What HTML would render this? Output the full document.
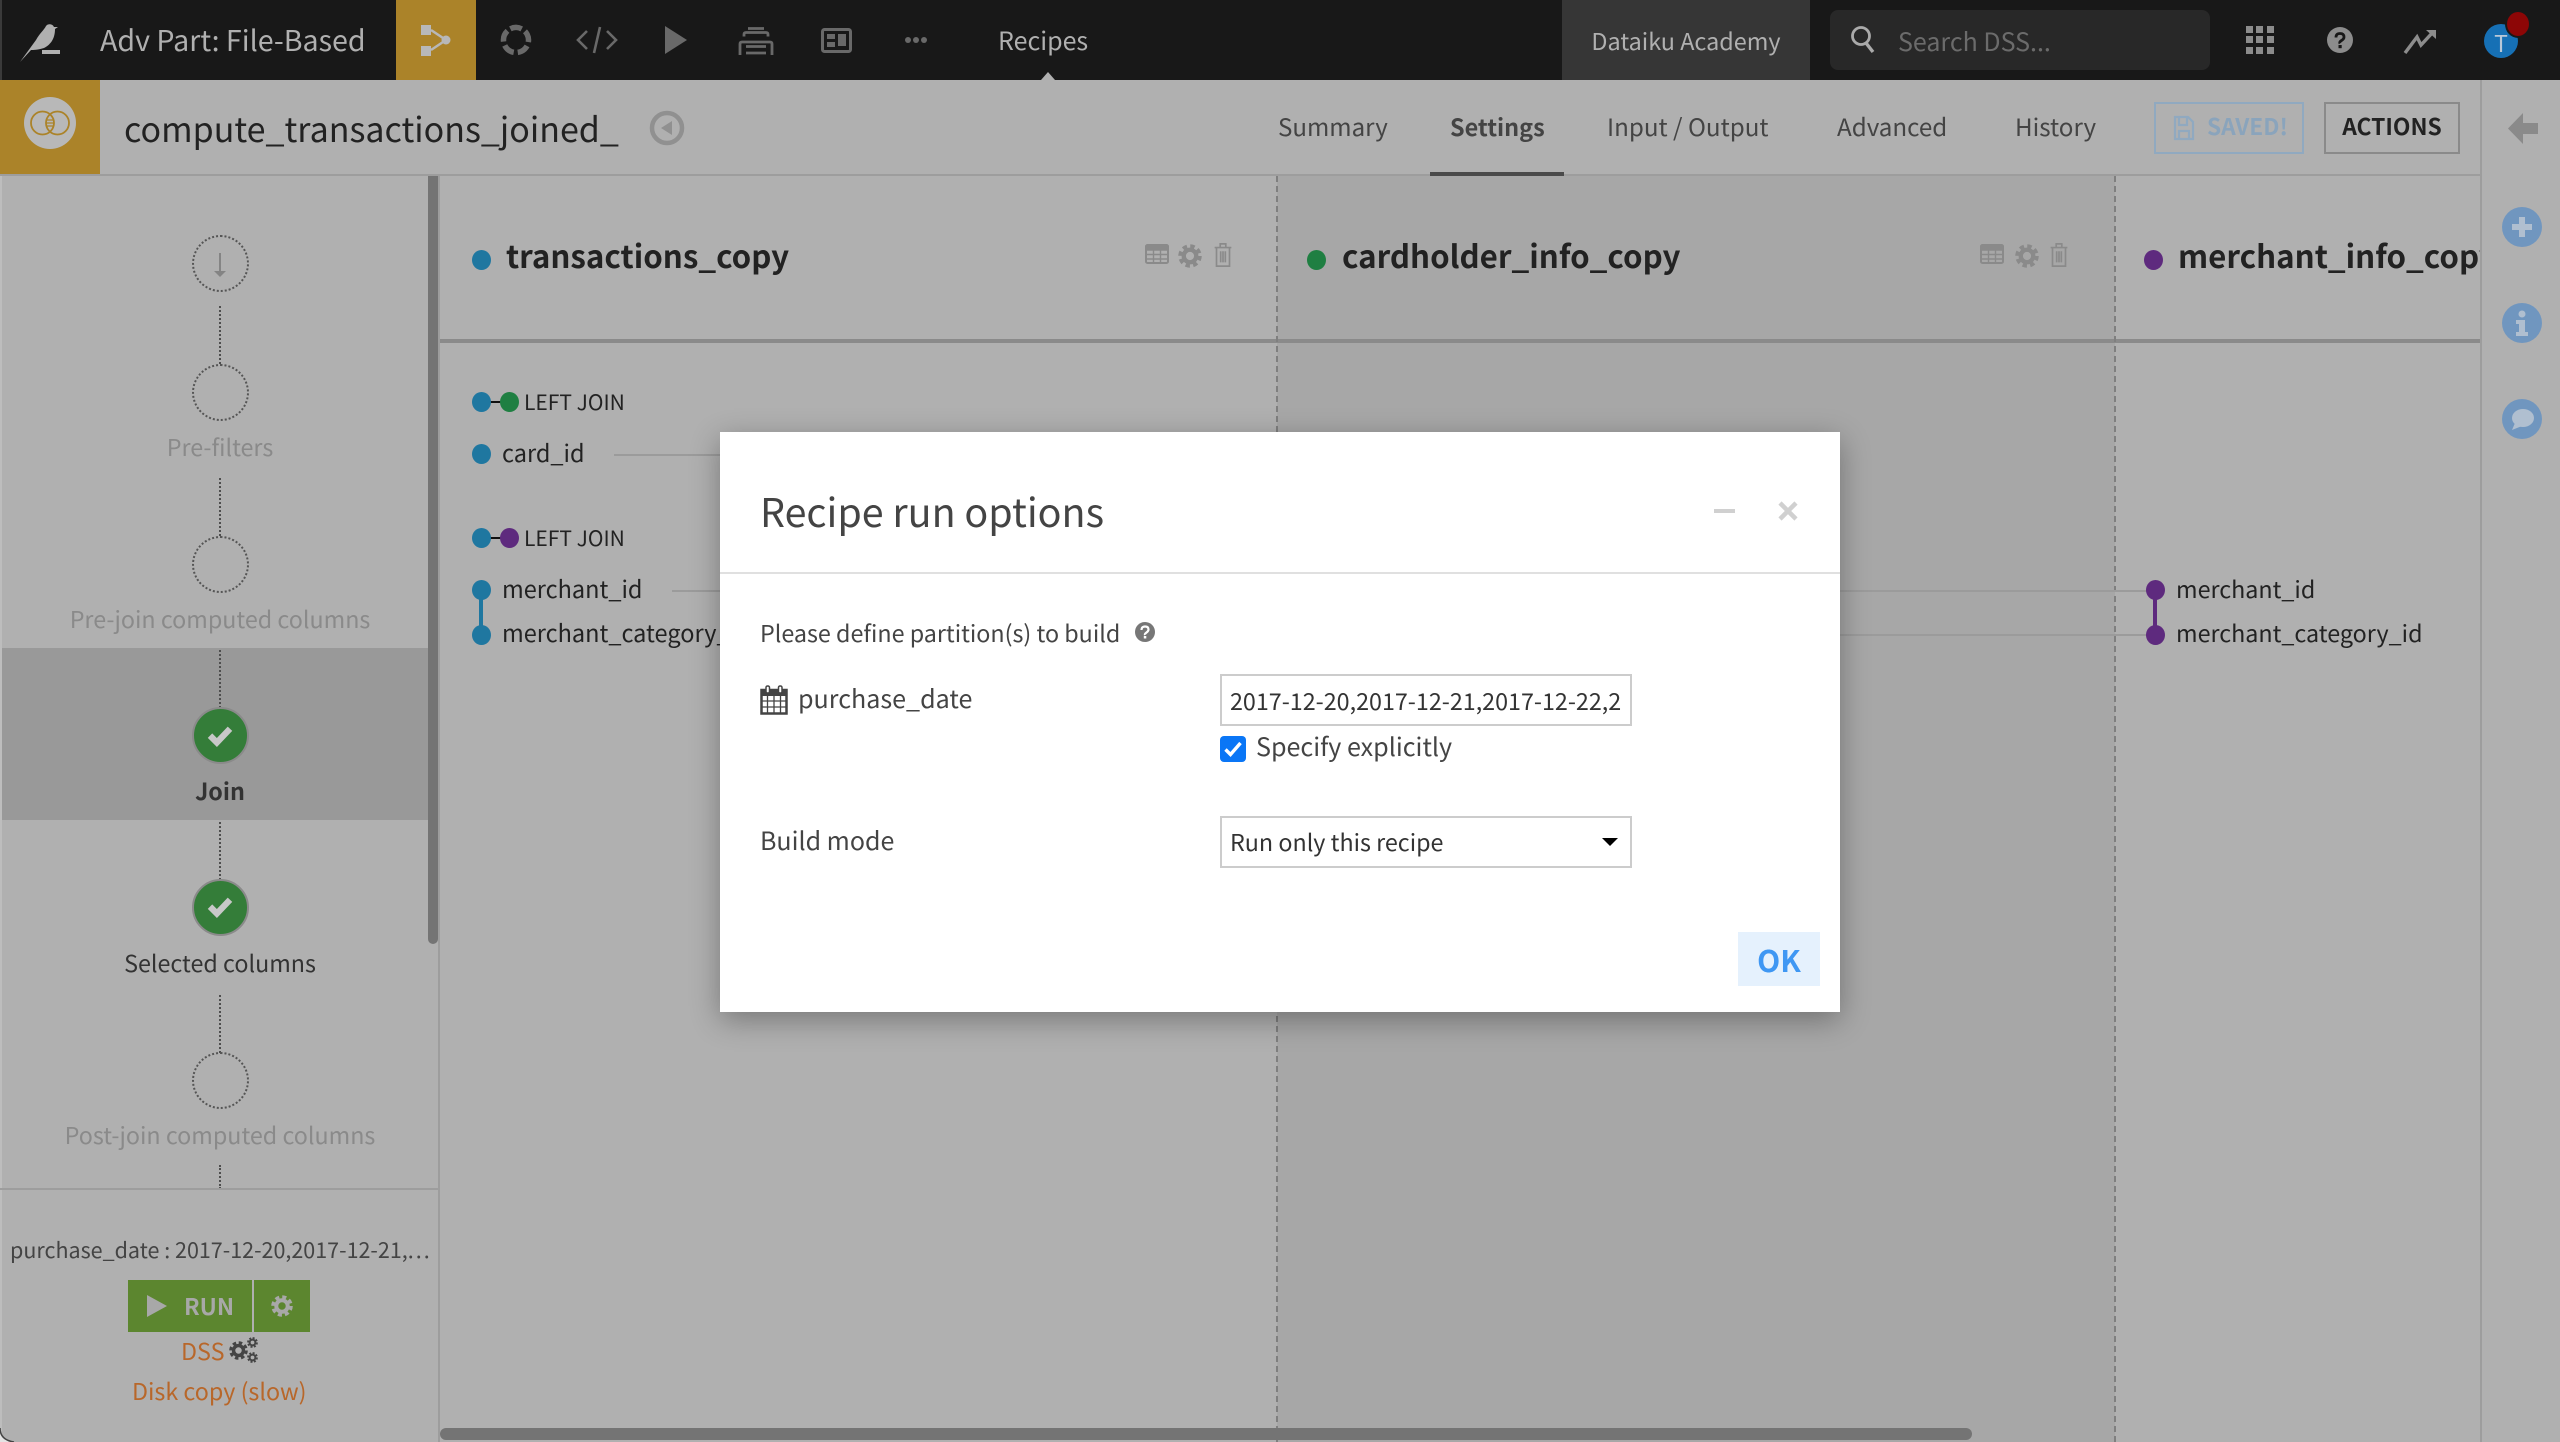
<!DOCTYPE html>
<html lang="en"><head><meta charset="utf-8"><title>Recipe run options</title>
<style>
html,body{margin:0;padding:0;width:2560px;height:1442px;overflow:hidden;background:#b0b0b0}
#p{position:relative;width:2560px;height:1442px;overflow:hidden;background:#b0b0b0;font-family:"Noto Sans CJK JP","Liberation Sans",sans-serif;color:#222}
.a{position:absolute}
.t{position:absolute;white-space:nowrap;line-height:40px;height:40px;font-size:23.3px}
.c{transform:translateX(-50%)}
.b{font-weight:700}
svg{position:absolute;overflow:visible}
.dot{position:absolute;width:19px;height:20px;border-radius:50%}
.bl{background:#1f77a0}.gr{background:#1f7f42}.pu{background:#5e2a7e}
.v{position:absolute;left:219px;width:0;border-left:2px dotted #4e4e4e}
.ring{position:absolute;left:192px;width:53px;height:53px;border:2px dotted #555;border-radius:50%}
.ok{position:absolute;left:192px;width:53px;height:53px;border:2px solid #8a8a8a;border-radius:50%;background:#347d39}
.dash{position:absolute;top:176px;height:1266px;width:0;border-left:2px dashed #7f7f7f}
.ln{position:absolute;height:2px;background:#9b9b9b}
</style></head><body><div id="p">
<svg width="0" height="0" style="position:absolute"><defs>
<symbol id="gear" viewBox="-10 -10 20 20"><circle r="5.2" fill="none" stroke="currentColor" stroke-width="3.6"/><circle r="8" fill="none" stroke="currentColor" stroke-width="3.6" stroke-dasharray="3.6 2.68"/></symbol>
<symbol id="tbl" viewBox="0 0 24 20"><rect x="1" y="1" width="22" height="18" rx="1.5" fill="none" stroke="currentColor" stroke-width="2"/><path d="M1 2h22v4H1zM8.5 6v13M15.5 6v13M1 10.500h22M1 15h22" fill="currentColor" stroke="currentColor" stroke-width="1.400"/></symbol>
<symbol id="trash" viewBox="0 0 20 28"><path d="M1 6h18M7 6V2h6v4M3 6v20h14V6M7.500 10v12M10 10v12M12.500 10v12" fill="none" stroke="currentColor" stroke-width="1.800"/></symbol>
<symbol id="check" viewBox="0 0 24 24"><path d="M4 12.500l5.500 5.500L20 7" fill="none" stroke="currentColor" stroke-width="5"/></symbol>
</defs></svg>

<!-- top bar -->
<div class="a" style="left:0;top:0;width:2560px;height:80px;background:#181818"></div>
<div class="a" style="left:0;top:0;width:2px;height:80px;background:#3a3a3a"></div>
<svg style="left:0;top:0" width="80" height="80"><path d="M20 62L36 40C40 33 44 30 46 26C48 23 53 24 54 27L58 27L55 29C55 37 52 44 44 48C38 50 33 50 31 50Z" fill="#b0b0b0"/><rect x="42" y="50" width="18" height="4" fill="#b0b0b0"/></svg>
<div class="t" style="left:100px;top:20px;font-size:28.6px;color:#b0b0b0">Adv Part: File-Based</div>
<div class="a" style="left:396px;top:0;width:80px;height:80px;background:#ab8329"></div>
<svg style="left:396px;top:0" width="80" height="80"><path d="M35 30L50 40L35 50" fill="none" stroke="#b8b8b8" stroke-width="2.500"/><rect x="25" y="25" width="10" height="10" fill="#b8b8b8"/><rect x="25" y="46" width="10" height="10" fill="#b8b8b8"/><circle cx="50" cy="40" r="4.500" fill="#b8b8b8"/></svg>
<svg style="left:476px;top:0" width="480" height="80" fill="#696969">
<circle cx="40" cy="40" r="12.500" fill="none" stroke="#696969" stroke-width="5.500" stroke-dasharray="11.700 4" transform="rotate(-116.800 40 40)"/>
<path d="M111 31l-9 9 9 9M131 31l9 9-9 9M124 27l-6 26" fill="none" stroke="#696969" stroke-width="2.600"/>
<path d="M189 26L211 40L189 54Z"/>
<path d="M272 28.500h16M268 36.500v-2q0-2 2-2h20q2 0 2 2v2M264 55V44q0-2 2-2h28q2 0 2 2v11M270 46.500h20M270 53h20" fill="none" stroke="#696969" stroke-width="2.800"/>
<rect x="346.500" y="29.500" width="28" height="22" rx="2" fill="none" stroke="#696969" stroke-width="3"/><rect x="351" y="34" width="8" height="5"/><rect x="351" y="42" width="8" height="5"/><rect x="362" y="34" width="8" height="12"/>
<circle cx="432" cy="40" r="3"/><circle cx="440" cy="40" r="3"/><circle cx="448" cy="40" r="3"/>
</svg>
<div class="t" style="left:998px;top:20px;font-size:25px;color:#b0b0b0">Recipes</div>
<svg style="left:1040px;top:70px" width="16" height="10"><path d="M8 2L15 10H1Z" fill="#b0b0b0"/></svg>
<div class="a" style="left:1562px;top:0;width:248px;height:80px;background:#363636"></div>
<div class="t c" style="left:1686px;top:20px;font-size:23.4px;color:#b0b0b0">Dataiku Academy</div>
<div class="a" style="left:1830px;top:10px;width:380px;height:60px;border-radius:8px;background:#282828"></div>
<svg style="left:1848px;top:24px" width="30" height="32"><circle cx="13" cy="12" r="8.500" fill="none" stroke="#aaa" stroke-width="2.800"/><path d="M18 19l7 9" stroke="#aaa" stroke-width="3.400"/></svg>
<div class="t" style="left:1898px;top:21px;font-size:25px;color:#6b6b6b">Search DSS...</div>
<svg style="left:2246px;top:26px" width="28" height="28" fill="#8c8c8c"><rect x="0" y="0" width="7" height="7"/><rect x="10" y="0" width="7" height="7"/><rect x="21" y="0" width="7" height="7"/><rect x="0" y="10" width="7" height="7"/><rect x="10" y="10" width="7" height="7"/><rect x="21" y="10" width="7" height="7"/><rect x="0" y="21" width="7" height="7"/><rect x="10" y="21" width="7" height="7"/><rect x="21" y="21" width="7" height="7"/></svg>
<svg style="left:2327px;top:27px" width="26" height="26"><circle cx="13" cy="13" r="13" fill="#8c8c8c"/><path d="M9 10.500Q9 6.500 13 6.500T17 10Q17 12 14.500 13.500T13 16.500" fill="none" stroke="#181818" stroke-width="2.800"/><rect x="11.500" y="18" width="3.200" height="3.200" fill="#181818"/></svg>
<svg style="left:2403px;top:28px" width="34" height="26"><path d="M2 25L14 9L18 17L31 3" fill="none" stroke="#8c8c8c" stroke-width="3.400"/><path d="M23 2h10v9z" fill="#8c8c8c"/></svg>
<div class="a" style="left:2484px;top:24px;width:34px;height:34px;border-radius:50%;background:#1670b5"></div>
<div class="t c" style="left:2501px;top:22px;font-size:23px;color:#b8c8d8">T</div>
<div class="a" style="left:2507px;top:12px;width:22px;height:24px;border-radius:50%;background:#8d0606;box-shadow:0 0 0 2px #181818"></div>

<!-- sub header -->
<div class="a" style="left:0;top:80px;width:100px;height:94px;background:#ab8329"></div>
<div class="a" style="left:24px;top:97px;width:52px;height:52px;border-radius:50%;background:#b8b8b8"></div>
<svg style="left:24px;top:97px" width="52" height="52"><circle cx="18.500" cy="26" r="11.500" fill="none" stroke="#ab8329" stroke-width="1.800"/><circle cx="33.500" cy="26" r="11.500" fill="none" stroke="#ab8329" stroke-width="1.800"/><path d="M23 23h6M22.500 26h7M23 29h6" stroke="#ab8329" stroke-width="1.200"/></svg>
<div class="a" style="left:0;top:174px;width:2480px;height:2px;background:#9d9d9d"></div>
<div class="t" style="left:124px;top:108px;font-size:34px;color:#222">compute_transactions_joined_</div>
<svg style="left:650px;top:111px" width="34" height="34"><circle cx="17" cy="17" r="15" fill="none" stroke="#909090" stroke-width="4.500"/><path d="M22 10V24L11 17Z" fill="#909090"/></svg>
<div class="t" style="left:1278px;top:106px;font-size:24.100px;color:#444">Summary</div>
<div class="t b" style="left:1450px;top:106px;font-size:23.400px;color:#444;font-weight:600">Settings</div>
<div class="t" style="left:1607px;top:106px;font-size:24.200px;color:#444">Input / Output</div>
<div class="t" style="left:1837px;top:106px;font-size:24.200px;color:#444">Advanced</div>
<div class="t" style="left:2015px;top:106px;font-size:24.200px;color:#444">History</div>
<div class="a" style="left:1430px;top:172px;width:134px;height:4px;background:#4a4a4a"></div>
<div class="a" style="left:2154px;top:102px;width:146px;height:48px;border:2px solid #90a9c0"></div>
<svg style="left:2173px;top:115px" width="22" height="26"><path d="M2 2h13l5 5v17H2zM6 2v8h8V2M6 24v-8h10v8" fill="none" stroke="#90a9c0" stroke-width="2.200"/></svg>
<div class="t b" style="left:2207px;top:106px;font-size:22.700px;color:#8aa4bc;font-weight:700">SAVED!</div>
<div class="a" style="left:2324px;top:102px;width:132px;height:48px;border:2px solid #8a8a8a"></div>
<div class="t c" style="left:2392px;top:106px;font-size:22.800px;color:#222;font-weight:600">ACTIONS</div>

<!-- right sidebar -->
<div class="a" style="left:2480px;top:80px;width:2px;height:1362px;background:#9d9d9d"></div>
<svg style="left:2507px;top:112px" width="32" height="33"><path d="M16 1L1 16.500L16 32V22H31V11H16Z" fill="#8a8a8a"/></svg>
<div class="a" style="left:2502px;top:207px;width:40px;height:40px;border-radius:50%;background:#7096bf"></div>
<svg style="left:2502px;top:207px" width="40" height="40"><path d="M20 10v20M10 20h20" stroke="#b0bfd0" stroke-width="6"/></svg>
<div class="a" style="left:2502px;top:303px;width:40px;height:40px;border-radius:50%;background:#7096bf"></div>
<svg style="left:2502px;top:303px" width="40" height="40" fill="#b0bfd0"><circle cx="20" cy="11" r="3.500"/><path d="M14 17h9v12h3v4H14v-4h3v-8h-3z"/></svg>
<div class="a" style="left:2502px;top:399px;width:40px;height:40px;border-radius:50%;background:#7096bf"></div>
<svg style="left:2502px;top:399px" width="40" height="40" fill="#b0bfd0"><ellipse cx="21" cy="19" rx="11" ry="9"/><path d="M13 24L10 31L20 27Z"/></svg>

<!-- column area -->
<div class="a" style="left:1277px;top:176px;width:838px;height:1266px;background:#a7a7a7"></div>
<div class="a" style="left:440px;top:339px;width:2040px;height:4px;background:#8a8a8a"></div>
<div class="dash" style="left:1276px"></div>
<div class="dash" style="left:2114px"></div>
<div class="dot bl" style="left:472px;top:250px"></div>
<div class="t b" style="left:506px;top:236px;font-size:31.300px">transactions_copy</div>
<div class="dot gr" style="left:1307px;top:250px"></div>
<div class="t b" style="left:1342px;top:236px;font-size:31.300px">cardholder_info_copy</div>
<div class="dot pu" style="left:2144px;top:250px"></div>
<div class="a" style="left:2178px;top:230px;width:302px;height:60px;overflow:hidden"><div class="t b" style="left:0;top:6px;font-size:31.300px">merchant_info_copy</div></div>
<svg style="left:1145px;top:244px;color:#8a8a8a" width="90" height="24"><use href="#tbl" x="0" y="0" width="24" height="20"/><use href="#gear" x="33" y="0" width="24" height="24"/><use href="#trash" x="68" y="-2" width="20" height="26"/></svg>
<svg style="left:1980px;top:244px;color:#8a8a8a" width="90" height="24"><use href="#tbl" x="0" y="0" width="24" height="20"/><use href="#gear" x="35" y="0" width="24" height="24"/><use href="#trash" x="69" y="-2" width="20" height="26"/></svg>

<div class="a" style="left:490px;top:401px;width:20px;height:2px;background:#111"></div>
<div class="dot bl" style="left:472px;top:392px"></div><div class="dot gr" style="left:500px;top:392px"></div>
<div class="t" style="left:524px;top:382px;font-size:21px">LEFT JOIN</div>
<div class="dot bl" style="left:472px;top:444px"></div>
<div class="t" style="left:502px;top:432px;font-size:23.500px">card_id</div>
<div class="ln" style="left:614px;top:454px;width:200px"></div>
<div class="a" style="left:490px;top:537px;width:20px;height:2px;background:#111"></div>
<div class="dot bl" style="left:472px;top:528px"></div><div class="dot pu" style="left:500px;top:528px"></div>
<div class="t" style="left:524px;top:518px;font-size:21px">LEFT JOIN</div>
<div class="a" style="left:479px;top:590px;width:4px;height:45px;background:#1f77a0"></div>
<div class="dot bl" style="left:472px;top:580px"></div><div class="dot bl" style="left:472px;top:625px"></div>
<div class="t" style="left:502px;top:568px;font-size:23.500px">merchant_id</div>
<div class="t" style="left:502px;top:612px;font-size:23.500px">merchant_category_id</div>
<div class="ln" style="left:672px;top:590px;width:150px"></div>

<div class="ln" style="left:1800px;top:590px;width:350px"></div>
<div class="ln" style="left:1800px;top:634px;width:350px"></div>
<div class="a" style="left:2153px;top:590px;width:4px;height:45px;background:#5e2a7e"></div>
<div class="dot pu" style="left:2146px;top:580px"></div><div class="dot pu" style="left:2146px;top:625px"></div>
<div class="t" style="left:2176px;top:568px;font-size:23.300px">merchant_id</div>
<div class="t" style="left:2176px;top:612px;font-size:23.300px">merchant_category_id</div>

<!-- left panel -->
<div class="a" style="left:0;top:648px;width:428px;height:172px;background:#999"></div>
<div class="a" style="left:428px;top:176px;width:10px;height:768px;background:#747474;border-radius:0 0 5px 5px"></div>
<div class="a" style="left:438px;top:176px;width:2px;height:1266px;background:#9d9d9d"></div>
<div class="a" style="left:0;top:176px;width:2px;height:1266px;background:#bdbdbd"></div>

<div class="ring" style="top:235px"></div>
<svg style="left:206px;top:251px" width="28" height="28"><path d="M14 2v21" stroke="#848484" stroke-width="2"/><path d="M8 20h12l-6 6z" fill="#848484"/></svg>
<div class="v" style="top:306px;height:58px"></div>
<div class="ring" style="top:364px"></div>
<div class="t c" style="left:220px;top:426px;color:#8a8a8a">Pre-filters</div>
<div class="v" style="top:478px;height:58px"></div>
<div class="ring" style="top:536px"></div>
<div class="t c" style="left:220px;top:598px;color:#8a8a8a">Pre-join computed columns</div>
<div class="v" style="top:650px;height:58px"></div>
<div class="ok" style="top:707px"></div>
<svg style="left:205px;top:720px;color:#c8c8c8" width="30" height="30"><use href="#check" width="30" height="30"/></svg>
<div class="t c b" style="left:220px;top:770px;color:#333">Join</div>
<div class="v" style="top:822px;height:58px"></div>
<div class="ok" style="top:879px"></div>
<svg style="left:205px;top:891px;color:#c8c8c8" width="30" height="30"><use href="#check" width="30" height="30"/></svg>
<div class="t c" style="left:220px;top:942px;color:#333">Selected columns</div>
<div class="v" style="top:995px;height:58px"></div>
<div class="ring" style="top:1052px"></div>
<div class="t c" style="left:220px;top:1114px;color:#8a8a8a">Post-join computed columns</div>
<div class="v" style="top:1165px;height:24px"></div>
<div class="a" style="left:0;top:1188px;width:438px;height:2px;background:#9d9d9d"></div>
<div class="t" style="left:10px;top:1230px;font-size:21.500px;color:#444">purchase_date : 2017-12-20,2017-12-21,<span style="letter-spacing:2px">...</span></div>
<div class="a" style="left:128px;top:1280px;width:124px;height:52px;background:#5c862f"></div>
<div class="a" style="left:254px;top:1280px;width:56px;height:52px;background:#5c862f"></div>
<svg style="left:146px;top:1294px" width="22" height="24"><path d="M1 1L21 12L1 23Z" fill="#a8a8a8"/></svg>
<div class="t" style="left:184px;top:1285px;font-size:23px;font-weight:600;color:#a8a8a8">RUN</div>
<svg style="left:271px;top:1295px;color:#a8a8a8" width="22" height="22"><use href="#gear" width="22" height="22"/></svg>
<div class="t" style="left:181px;top:1330px;color:#b8672a">DSS</div>
<svg style="left:229px;top:1337px;color:#444" width="30" height="28"><use href="#gear" x="0" y="4" width="19" height="19"/><use href="#gear" x="18" y="0" width="11" height="11"/><use href="#gear" x="18" y="15" width="11" height="11"/></svg>
<div class="t" style="left:132px;top:1370px;color:#b8672a">Disk copy (slow)</div>
<div class="a" style="left:440px;top:1428px;width:1532px;height:12px;border-radius:6px;background:#747474"></div>
<svg style="left:0;top:1428px" width="14" height="14"><path d="M0 14V0Q0 12 14 14Z" fill="#e4e4e4"/><path d="M0 0Q0 12 14 14" fill="none" stroke="#444" stroke-width="1.500"/></svg>

<!-- modal -->
<div class="a" style="left:720px;top:432px;width:1120px;height:580px;background:#fff;box-shadow:0 8px 28px rgba(0,0,0,.32)">
<div class="t" style="left:40px;top:57px;height:44px;line-height:44px;font-size:39.400px;color:#444">Recipe run options</div>
<div class="a" style="left:0;top:140px;width:1120px;height:2px;background:#e0e0e0"></div>
<div class="a" style="left:994px;top:77px;width:21px;height:4px;background:#d0d0d0"></div>
<svg style="left:1058px;top:69px" width="20" height="20"><path d="M2 2L18 18M18 2L2 18" stroke="#d0d0d0" stroke-width="4.500"/></svg>
<div class="t" style="left:40px;top:180px;color:#444">Please define partition(s) to build</div>
<svg style="left:415px;top:190px" width="20" height="20"><circle cx="10" cy="10" r="10" fill="#777"/><path d="M6.500 8Q6.500 4.500 10 4.500T13.500 7.500Q13.500 9 11.500 10.500T10 13" fill="none" stroke="#fff" stroke-width="2.200"/><rect x="8.800" y="14" width="2.500" height="2.500" fill="#fff"/></svg>
<svg style="left:40px;top:253px" width="28" height="30"><path d="M1.500 5h25v23.500h-25z" fill="none" stroke="#444" stroke-width="2.500"/><path d="M1 5h26v6H1z" fill="#444"/><path d="M1 16h26M1 22h26M7.500 11v17M14 11v17M20.500 11v17" stroke="#444" stroke-width="1.300"/><rect x="6" y="1" width="3.500" height="7" rx="1.500" fill="#fff" stroke="#444" stroke-width="1.500"/><rect x="18.500" y="1" width="3.500" height="7" rx="1.500" fill="#fff" stroke="#444" stroke-width="1.500"/></svg>
<div class="t" style="left:78px;top:246px;font-size:25.100px;color:#444">purchase_date</div>
<div class="a" style="left:500px;top:242px;width:408px;height:48px;border:2px solid #ccc;background:#fff"></div>
<div class="t" style="left:510px;top:248px;font-size:23.300px;color:#333">2017-12-20,2017-12-21,2017-12-22,2</div>
<div class="a" style="left:500px;top:304px;width:26px;height:26px;border-radius:4px;background:#0a76f6"></div>
<svg style="left:502px;top:306px;color:#fff" width="22" height="22"><path d="M3.500 11.500l5 5L18.500 5" fill="none" stroke="#fff" stroke-width="3.400"/></svg>
<div class="t" style="left:536px;top:294px;font-size:25.100px;color:#444">Specify explicitly</div>
<div class="t" style="left:40px;top:388px;font-size:25px;color:#444">Build mode</div>
<div class="a" style="left:500px;top:384px;width:408px;height:48px;border:2px solid #ccc;background:#fff"></div>
<div class="t" style="left:510px;top:389px;font-size:23.300px;color:#333">Run only this recipe</div>
<svg style="left:882px;top:406px" width="16" height="8"><path d="M0 0H16L8 8Z" fill="#000"/></svg>
<div class="a" style="left:1018px;top:500px;width:82px;height:54px;background:#e5f1fd"></div>
<div class="t c" style="left:1059px;top:507px;font-size:30px;font-weight:600;color:#3f97f3">OK</div>
</div>
</div></body></html>
